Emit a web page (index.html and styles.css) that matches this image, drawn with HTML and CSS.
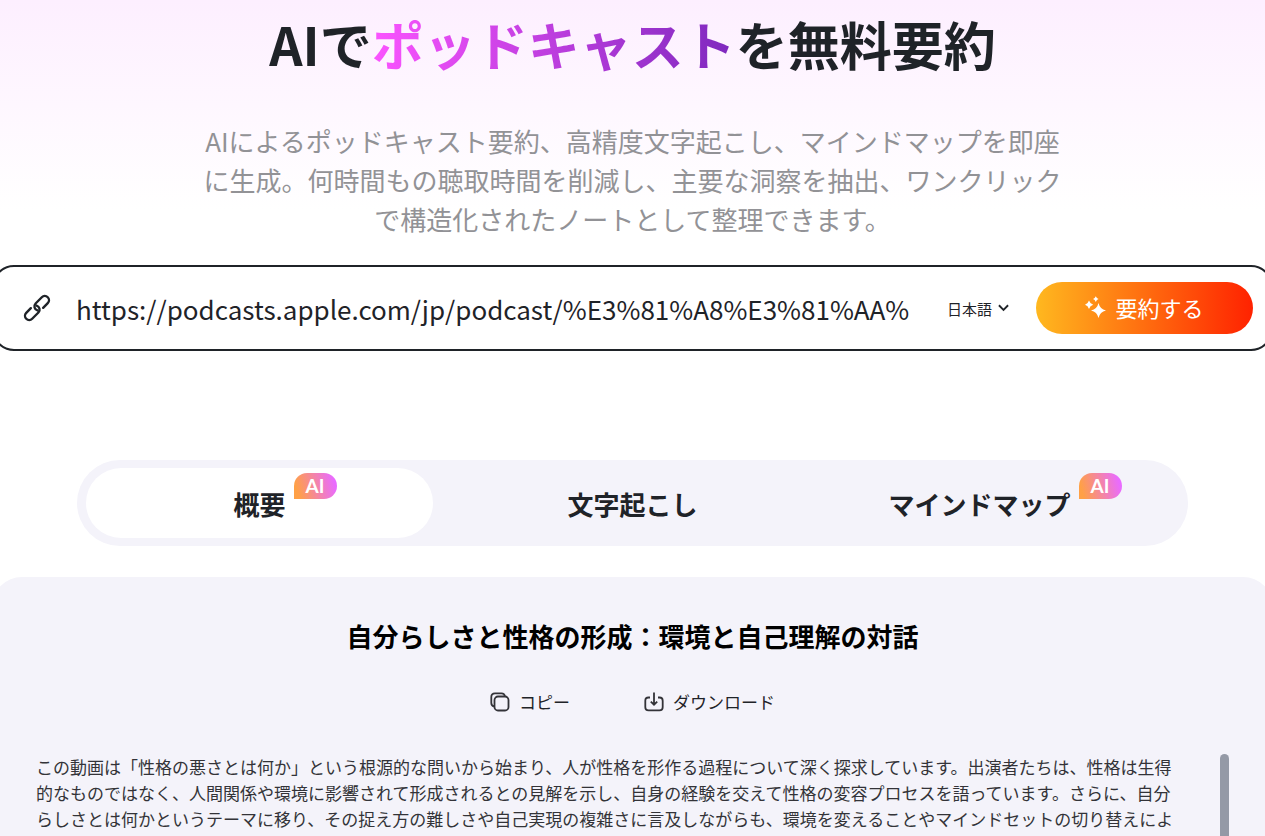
FILE: index.html
```html
<!DOCTYPE html>
<html lang="ja">
<head>
    <meta charset="UTF-8">
    <meta name="viewport" content="width=device-width, initial-scale=1.0">
    <title>AIでポッドキャストを無料要約</title>
    <link rel="stylesheet" href="styles.css">
</head>
<body>
    <main>
        <section class="hero">
            <h1>AIで<span class="highlight">ポッドキャスト</span>を無料要約</h1>
            <p class="lead">AIによるポッドキャスト要約、高精度文字起こし、マインドマップを即座に生成。何時間もの聴取時間を削減し、主要な洞察を抽出、ワンクリックで構造化されたノートとして整理できます。</p>
        </section>

        <form class="url-form">
            <label class="url-label" for="url" aria-label="URL">
                <svg width="28" height="28" viewBox="-14 -14 28 28" fill="none" stroke="#1f2328" stroke-width="2.4" stroke-linecap="round">
                    <path transform="rotate(-45)" d="M4.500 4.200H11A4.200 4.200 0 0 0 11-4.200H2.200A4.200 4.200 0 0 0-1.400 2"/>
                    <path transform="rotate(135)" d="M4.500 4.200H11A4.200 4.200 0 0 0 11-4.200H2.200A4.200 4.200 0 0 0-1.400 2"/>
                </svg>
            </label>
            <input type="text" id="url" name="url" value="https://podcasts.apple.com/jp/podcast/%E3%81%A8%E3%81%AA%">
            <div class="lang">
                <select id="lang" name="lang" aria-label="言語">
                    <option value="ja">日本語</option>
                </select>
                <svg class="lang-arrow" width="11" height="8" viewBox="0 0 12 8" fill="none" stroke="#1f2328" stroke-width="2">
                    <path d="M1 1l5 5 5-5"/>
                </svg>
            </div>
            <button type="submit" class="submit">
                <svg width="22" height="22" viewBox="0 0 22 22" fill="#fff">
                    <path d="M13.500 7q1.400 6.100 7.500 7.500q-6.100 1.400-7.500 7.500q-1.400-6.100-7.500-7.500q6.100-1.400 7.500-7.500z"/>
                    <path d="M4 4.600q1 3.300 4.200 4.200q-3.200.9-4.200 4.200q-1-3.300-4.200-4.200q3.200-.9 4.200-4.200z"/>
                    <path d="M10.800.3q.8 2.200 2.800 2.800q-2 .6-2.800 2.800q-.8-2.200-2.800-2.800q2-.6 2.800-2.800z"/>
                </svg>
                要約する
            </button>
        </form>

        <div class="tabs" role="tablist">
            <button type="button" class="tab active" role="tab" aria-selected="true">
                <span class="tab-label">概要<span class="badge">AI</span></span>
            </button>
            <button type="button" class="tab" role="tab">
                <span class="tab-label">文字起こし</span>
            </button>
            <button type="button" class="tab" role="tab">
                <span class="tab-label badge-space">マインドマップ<span class="badge">AI</span></span>
            </button>
        </div>

        <section class="result">
            <h2>自分らしさと性格の形成：環境と自己理解の対話</h2>
            <div class="actions">
                <button type="button" class="action">
                    <svg width="20" height="20" viewBox="0 0 20 20" fill="none" stroke="#333338" stroke-width="1.8">
                        <rect x="4.500" y="4.500" width="14" height="14" rx="3.500"/>
                        <path d="M4.500 14.500C2.500 14.300 1.300 13 1.300 11V5C1.300 2.600 2.600 1.300 5 1.300h6.500c2 0 3.200 1.200 3.500 3.200"/>
                    </svg>
                    コピー
                </button>
                <button type="button" class="action">
                    <svg width="20" height="20" viewBox="0 0 20 20" fill="none" stroke="#333338" stroke-width="1.8">
                        <path d="M6 5.500H4.500c-2 0-3.200 1.200-3.200 3.200v6.500c0 2 1.200 3.200 3.200 3.200h11c2 0 3.200-1.200 3.200-3.200V8.700c0-2-1.200-3.200-3.200-3.200H14"/>
                        <path d="M10 .5v12M6.800 9.600L10 12.700l3.200-3.100"/>
                    </svg>
                    ダウンロード
                </button>
            </div>
            <div class="summary">
                <p>この動画は「性格の悪さとは何か」という根源的な問いから始まり、人が性格を形作る過程について深く探求しています。出演者たちは、性格は生得的なものではなく、人間関係や環境に影響されて形成されるとの見解を示し、自身の経験を交えて性格の変容プロセスを語っています。さらに、自分らしさとは何かというテーマに移り、その捉え方の難しさや自己実現の複雑さに言及しながらも、環境を変えることやマインドセットの切り替えによ</p>
                <div class="scrollbar"></div>
            </div>
        </section>
    </main>
</body>
</html>
```

FILE: styles.css
```css
* {
    margin: 0;
    padding: 0;
    box-sizing: border-box;
}
body {
    font-family: 'Noto Sans CJK JP', 'Noto Sans', sans-serif;
    background: #fff linear-gradient(#fdefff, #fff 210px) no-repeat;
    color: #1f2328;
    overflow: hidden;
}
main {
    display: flex;
    flex-direction: column;
    height: 100vh;
}
button, input, select {
    font-family: inherit;
    color: inherit;
    border: none;
    background: none;
}
button {
    cursor: pointer;
}
.hero {
    padding-top: 6px;
    text-align: center;
}
h1 {
    font-size: 52px;
    line-height: 76px;
    font-weight: 700;
}
.highlight {
    background: linear-gradient(90deg, #fb54ff, #7d28bd);
    -webkit-background-clip: text;
    background-clip: text;
    color: transparent;
}
.lead {
    max-width: 866px;
    margin: 39px auto 27px;
    font-size: 26px;
    line-height: 39px;
    color: #929296;
}

/* url form */
.url-form {
    display: flex;
    align-items: center;
    height: 86px;
    margin: 0 -8px;
    padding: 0 18px 0 29px;
    border: 2px solid #1f2328;
    border-radius: 22px;
    background-color: #fff;
}
.url-label {
    display: flex;
    margin-right: 25px;
}
.url-form input {
    flex: 1;
    min-width: 0;
    font-size: 26px;
    outline: none;
}
.lang {
    display: flex;
    align-items: center;
    gap: 5px;
    margin: 0 27px 0 34px;
}
.lang select {
    appearance: none;
    font-size: 15px;
}
.submit {
    display: flex;
    align-items: center;
    justify-content: center;
    gap: 8px;
    width: 217px;
    height: 52px;
    padding-bottom: 2px;
    border-radius: 26px;
    background: linear-gradient(90deg, #ffb81f, #ff2200);
    color: #fff;
    font-size: 22px;
}

/* tabs */
.tabs {
    display: grid;
    grid-template-columns: repeat(3, 1fr);
    gap: 26px;
    width: 100%;
    max-width: 1111px;
    margin: 109px auto 31px;
    padding: 8px 9px;
    border-radius: 43px;
    background-color: #f4f3fa;
}
.tab {
    height: 70px;
    border-radius: 35px;
    font-size: 26px;
    font-weight: 700;
}
.tab.active {
    background-color: #fff;
}
.tab-label {
    position: relative;
}
.badge-space {
    margin-right: 52px;
}
.badge {
    position: absolute;
    top: -12px;
    left: 100%;
    width: 43px;
    margin-left: 8px;
    border-radius: 13px 13px 13px 0;
    background: linear-gradient(75deg, #ffa046 10%, #e96bff 90%);
    color: #fff;
    font-family: Lato, sans-serif;
    font-size: 19px;
    font-weight: 700;
    line-height: 26px;
}

/* result */
.result {
    display: flex;
    flex-direction: column;
    flex: 1;
    min-height: 0;
    margin: 0 -8px;
    padding: 39px 44px 0;
    border-radius: 30px 30px 0 0;
    background-color: #f4f3fa;
}
h2 {
    font-size: 26px;
    line-height: 40px;
    text-align: center;
    color: #000;
}
.actions {
    display: flex;
    justify-content: center;
    gap: 74px;
    margin: 33px 0 39px;
}
.action {
    display: flex;
    align-items: center;
    gap: 9px;
    font-size: 17px;
    line-height: 26px;
}
.summary {
    display: flex;
    justify-content: space-between;
    flex: 1;
    min-height: 0;
    overflow: hidden;
}
.summary p {
    max-width: 1150px;
    font-size: 17px;
    line-height: 26px;
    color: #333338;
}
.scrollbar {
    width: 9px;
    border-radius: 5px 5px 0 0;
    background-color: #9499a6;
}
```
